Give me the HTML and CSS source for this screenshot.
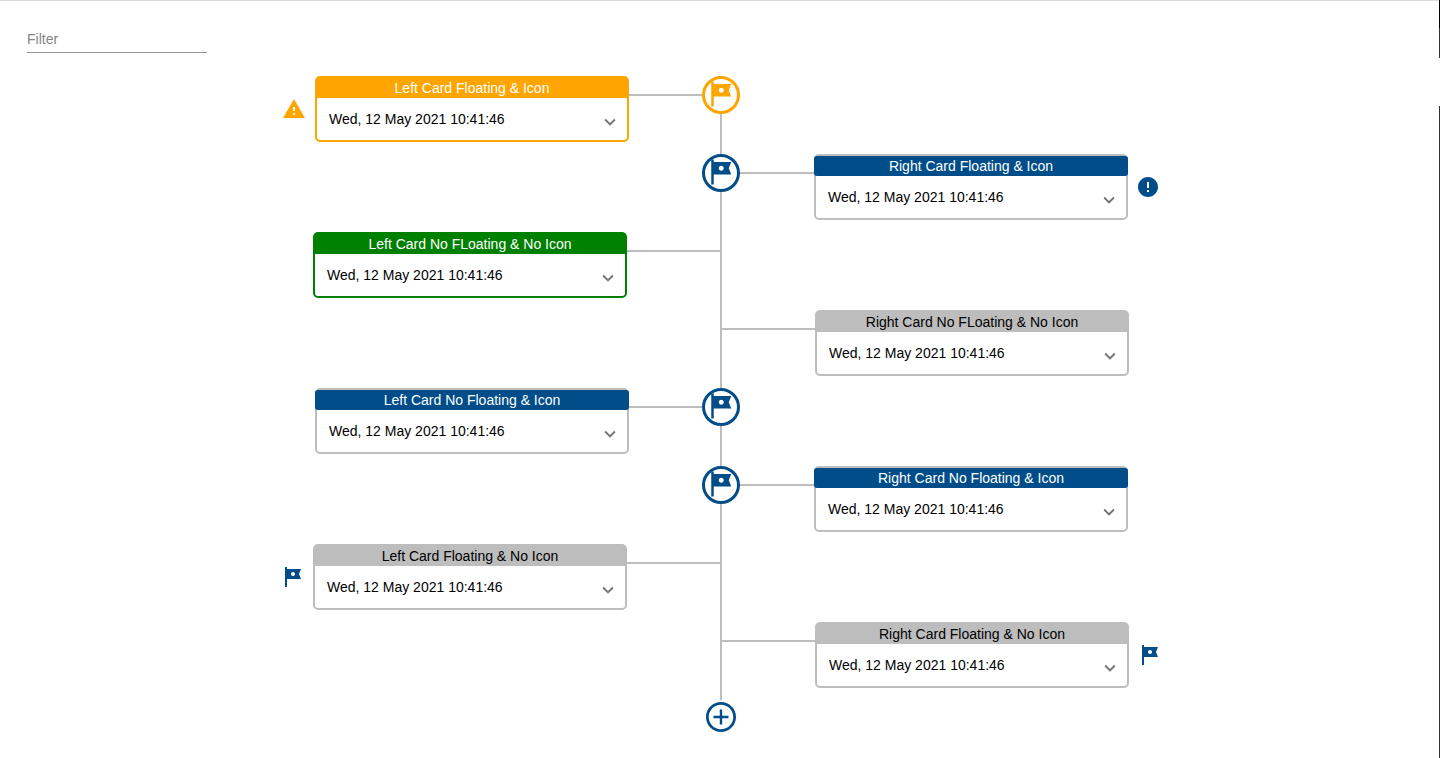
FILE: index.html
```html
<!DOCTYPE html>
<html lang="en">
<head>
<meta charset="utf-8">
<title>Timeline</title>
<link rel="stylesheet" href="styles.css">
</head>
<body>
<svg class="sprite" aria-hidden="true">
  <symbol id="flag" viewBox="0 0 24 24"><path d="M21 4H7V2H5v20h2v-8h14l-2-5 2-5zm-6 5c0 1.100-.9 2-2 2s-2-.9-2-2 .9-2 2-2 2 .9 2 2z"/></symbol>
  <symbol id="warning" viewBox="0 0 24 24"><path d="M1 21h22L12 2 1 21zm12-3h-2v-2h2v2zm0-4h-2v-4h2v4z"/></symbol>
  <symbol id="error" viewBox="0 0 24 24"><path d="M12 2C6.480 2 2 6.480 2 12s4.480 10 10 10 10-4.480 10-10S17.520 2 12 2zm1 15h-2v-2h2v2zm0-4h-2V7h2v6z"/></symbol>
  <symbol id="more" viewBox="0 0 24 24"><path d="M16.590 8.590L12 13.170 7.410 8.590 6 10l6 6 6-6z"/></symbol>
  <symbol id="add" viewBox="2 2 20 20"><path d="M12.800 7h-1.600v4.200H7v1.600h4.200V17h1.600v-4.200H17v-1.600h-4.200V7zM12 2C6.480 2 2 6.480 2 12s4.480 10 10 10 10-4.480 10-10S17.520 2 12 2zm0 18.200c-4.520 0-8.200-3.680-8.200-8.200s3.680-8.200 8.200-8.200 8.200 3.680 8.200 8.200-3.680 8.200-8.200 8.200z"/></symbol>
</svg>

<main class="page">
  <input class="filter" type="text" placeholder="Filter" aria-label="Filter">

  <div class="timeline">
    <section class="row">
      <div class="side side-left">
        <svg class="icon orange"><use href="#warning"/></svg>
        <article class="card card-orange">
          <h2 class="card-title">Left Card Floating &amp; Icon</h2>
          <div class="card-body"><time>Wed, 12 May 2021 10:41:46</time><button class="expand" aria-label="Expand"><svg class="chevron"><use href="#more"/></svg></button></div>
        </article>
        <span class="link"></span>
      </div>
      <div class="axis"><span class="node orange"><svg class="node-icon"><use href="#flag"/></svg></span></div>
    </section>

    <section class="row">
      <div class="axis"><span class="node"><svg class="node-icon"><use href="#flag"/></svg></span></div>
      <div class="side side-right">
        <span class="link"></span>
        <article class="card card-blue">
          <h2 class="card-title">Right Card Floating &amp; Icon</h2>
          <div class="card-body"><time>Wed, 12 May 2021 10:41:46</time><button class="expand" aria-label="Expand"><svg class="chevron"><use href="#more"/></svg></button></div>
        </article>
        <svg class="icon"><use href="#error"/></svg>
      </div>
    </section>

    <section class="row">
      <div class="side side-left">
        <article class="card card-green">
          <h2 class="card-title">Left Card No FLoating &amp; No Icon</h2>
          <div class="card-body"><time>Wed, 12 May 2021 10:41:46</time><button class="expand" aria-label="Expand"><svg class="chevron"><use href="#more"/></svg></button></div>
        </article>
        <span class="link link-long"></span>
      </div>
      <div class="axis"></div>
    </section>

    <section class="row">
      <div class="axis"></div>
      <div class="side side-right">
        <span class="link link-long"></span>
        <article class="card">
          <h2 class="card-title">Right Card No FLoating &amp; No Icon</h2>
          <div class="card-body"><time>Wed, 12 May 2021 10:41:46</time><button class="expand" aria-label="Expand"><svg class="chevron"><use href="#more"/></svg></button></div>
        </article>
      </div>
    </section>

    <section class="row">
      <div class="side side-left">
        <article class="card card-blue">
          <h2 class="card-title">Left Card No Floating &amp; Icon</h2>
          <div class="card-body"><time>Wed, 12 May 2021 10:41:46</time><button class="expand" aria-label="Expand"><svg class="chevron"><use href="#more"/></svg></button></div>
        </article>
        <span class="link"></span>
      </div>
      <div class="axis"><span class="node"><svg class="node-icon"><use href="#flag"/></svg></span></div>
    </section>

    <section class="row">
      <div class="axis"><span class="node"><svg class="node-icon"><use href="#flag"/></svg></span></div>
      <div class="side side-right">
        <span class="link"></span>
        <article class="card card-blue">
          <h2 class="card-title">Right Card No Floating &amp; Icon</h2>
          <div class="card-body"><time>Wed, 12 May 2021 10:41:46</time><button class="expand" aria-label="Expand"><svg class="chevron"><use href="#more"/></svg></button></div>
        </article>
      </div>
    </section>

    <section class="row">
      <div class="side side-left">
        <svg class="icon"><use href="#flag"/></svg>
        <article class="card">
          <h2 class="card-title">Left Card Floating &amp; No Icon</h2>
          <div class="card-body"><time>Wed, 12 May 2021 10:41:46</time><button class="expand" aria-label="Expand"><svg class="chevron"><use href="#more"/></svg></button></div>
        </article>
        <span class="link link-long"></span>
      </div>
      <div class="axis"></div>
    </section>

    <section class="row">
      <div class="axis"></div>
      <div class="side side-right">
        <span class="link link-long"></span>
        <article class="card">
          <h2 class="card-title">Right Card Floating &amp; No Icon</h2>
          <div class="card-body"><time>Wed, 12 May 2021 10:41:46</time><button class="expand" aria-label="Expand"><svg class="chevron"><use href="#more"/></svg></button></div>
        </article>
        <svg class="icon"><use href="#flag"/></svg>
      </div>
    </section>

    <button class="add" aria-label="Add"><svg class="add-icon"><use href="#add"/></svg></button>
  </div>
</main>
<div class="edge"><span class="edge-top"></span><span class="edge-mid"></span><span class="edge-rest"></span></div>
</body>
</html>
```
FILE: styles.css
```css
:root {
  --blue: #004d89;
  --orange: #ffa500;
  --green: #008000;
  --grey: #bdbdbd;
}

* {
  box-sizing: border-box;
}

body {
  margin: 0;
  min-height: 100vh;
  display: flex;
  background: #fff;
  color: #000;
  font: 14px/20px "Liberation Sans", Arial, sans-serif;
}

button {
  padding: 0;
  border: 0;
  background: none;
  color: inherit;
  cursor: pointer;
}

svg {
  display: block;
  fill: currentColor;
}

.sprite {
  position: absolute;
  width: 0;
  height: 0;
}

.page {
  flex: 1;
  border-top: 1px solid #dadade;
  padding-top: 25px;
}

.filter {
  display: block;
  width: 180px;
  height: 27px;
  margin: 0 0 23px 27px;
  padding: 0;
  border: 0;
  border-bottom: 1px solid #949494;
  background: none;
  font: inherit;
  outline: 0;
}

.filter::placeholder {
  color: #858585;
  opacity: 1;
}

.timeline {
  display: flex;
  flex-direction: column;
  padding-left: 3px;
}

.row {
  display: grid;
  grid-template-columns: 1fr auto 1fr;
  min-height: 78px;
}

.axis {
  grid-column: 2;
  display: flex;
  flex-direction: column;
  align-items: center;
}

.axis::after {
  content: "";
  flex: 1;
  width: 2px;
  background: var(--grey);
}

.node {
  width: 38px;
  height: 38px;
  border: 3px solid;
  border-radius: 50%;
  color: var(--blue);
}

.node-icon {
  width: 30px;
  height: 30px;
}

.side {
  display: flex;
  align-items: flex-start;
}

.side-left {
  grid-column: 1;
  justify-content: flex-end;
}

.side-right {
  grid-column: 3;
}

.link {
  width: 73px;
  height: 2px;
  margin-top: 18px;
  background: var(--grey);
}

.side-right .link {
  width: 74px;
}

.side .link-long {
  width: 93px;
}

.icon {
  width: 24px;
  height: 24px;
  margin: 21px 9px 0 8px;
  color: var(--blue);
}

.orange {
  color: var(--orange);
}

.card {
  --accent: var(--grey);
  width: 314px;
  border: 2px solid var(--accent);
  border-radius: 5px;
}

.card-title {
  margin: 0;
  background: var(--accent);
  font-size: 14px;
  font-weight: 400;
  line-height: 20px;
  text-align: center;
}

.card-orange {
  --accent: var(--orange);
}

.card-green {
  --accent: var(--green);
}

.card-orange .card-title,
.card-green .card-title,
.card-blue .card-title {
  color: #fff;
}

.card-blue .card-title {
  margin: 0 -2px;
  background: var(--blue);
  border-radius: 3px;
}

.card-body {
  display: flex;
  justify-content: space-between;
  padding: 0 6px 0 12px;
  line-height: 42px;
}

.expand {
  padding-top: 5px;
  color: #757575;
}

.chevron {
  width: 22px;
  height: 22px;
}

.add {
  align-self: center;
  margin-top: 2px;
  color: var(--blue);
}

.add-icon {
  width: 30px;
  height: 30px;
}

.edge {
  width: 1px;
  display: flex;
  flex-direction: column;
}

.edge-top {
  height: 28px;
  background: #000;
}

.edge-mid {
  height: 30px;
  margin-bottom: 48px;
  background: #323234;
}

.edge-rest {
  flex: 1;
  background: #323234;
}
```
